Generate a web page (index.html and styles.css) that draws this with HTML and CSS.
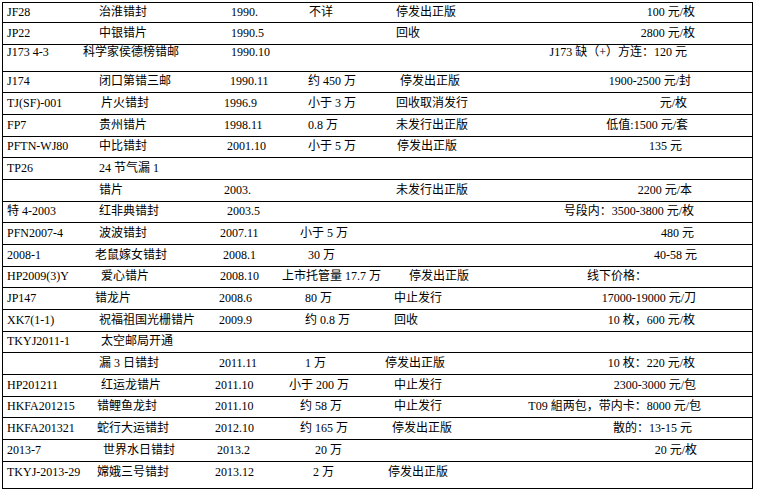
FILE: index.html
```html
<!DOCTYPE html>
<html lang="zh-CN">
<head>
<meta charset="utf-8">
<title>错票列表</title>
<link rel="stylesheet" href="styles.css">
</head>
<body>
<div class="sheet">
  <div class="row first"><span>JF28</span><span>治淮错封</span><span class="x16">1990.</span><span class="x9">不详</span><span class="x4">停发出正版</span><span class="price">100 元/枚</span></div>
  <div class="row"><span>JP22</span><span>中银错片</span><span class="x16">1990.5</span><span></span><span class="x4">回收</span><span class="price">2800 元/枚</span></div>
  <div class="row tall"><span>J173 4-3</span><span class="x-16">科学家侯德榜错邮</span><span class="x16">1990.10</span><span></span><span></span><span class="price r8">J173 缺（+）方连：120 元</span></div>
  <div class="row"><span>J174</span><span>闭口第错三邮</span><span class="x15">1990.11</span><span class="x8">约 450 万</span><span class="x8">停发出正版</span><span class="price r4">1900-2500 元/封</span></div>
  <div class="row"><span>TJ(SF)-001</span><span class="x2">片火错封</span><span class="x9">1996.9</span><span class="x8">小于 3 万</span><span class="x4">回收取消发行</span><span class="price r8">元/枚</span></div>
  <div class="row"><span>FP7</span><span>贵州错片</span><span class="x9">1998.11</span><span class="x8">0.8 万</span><span class="x4">未发行出正版</span><span class="price r7">低值:1500 元/套</span></div>
  <div class="row"><span>PFTN-WJ80</span><span>中比错封</span><span class="x12">2001.10</span><span class="x8">小于 5 万</span><span class="x5">停发出正版</span><span class="price r13">135 元</span></div>
  <div class="row"><span>TP26</span><span>24 节气漏 1</span><span></span><span></span><span></span><span class="price"></span></div>
  <div class="row"><span></span><span>错片</span><span class="x9">2003.</span><span></span><span class="x4">未发行出正版</span><span class="price r3">2200 元/本</span></div>
  <div class="row"><span>特 4-2003</span><span>红非典错封</span><span class="x12">2003.5</span><span></span><span></span><span class="price r1">号段内：3500-3800 元/枚</span></div>
  <div class="row"><span>PFN2007-4</span><span>波波错封</span><span class="x5">2007.11</span><span>小于 5 万</span><span></span><span class="price r1">480 元</span></div>
  <div class="row"><span>2008-1</span><span class="x-4">老鼠嫁女错封</span><span class="x8">2008.1</span><span class="x8">30 万</span><span></span><span class="price r-2">40-58 元</span></div>
  <div class="row"><span>HP2009(3)Y</span><span class="x2">爱心错片</span><span class="x5">2008.10</span><span class="x-18">上市托管量 17.7 万</span><span class="x17">停发出正版</span><span class="price r48">线下价格：</span></div>
  <div class="row"><span>JP147</span><span class="x-4">错龙片</span><span class="x4">2008.6</span><span class="x5">80 万</span><span class="x2">中止发行</span><span class="price r-1">17000-19000 元/刀</span></div>
  <div class="row"><span>XK7(1-1)</span><span>祝福祖国光栅错片</span><span class="x4">2009.9</span><span class="x5">约 0.8 万</span><span class="x2">回收</span><span class="price">10 枚，600 元/枚</span></div>
  <div class="row"><span>TKYJ2011-1</span><span class="x2">太空邮局开通</span><span></span><span></span><span></span><span class="price"></span></div>
  <div class="row"><span></span><span>漏 3 日错封</span><span class="x4">2011.11</span><span class="x5">1 万</span><span class="x-7">停发出正版</span><span class="price">10 枚：220 元/枚</span></div>
  <div class="row"><span>HP201211</span><span class="x2">红运龙错片</span><span>2011.10</span><span class="x-11">小于 200 万</span><span class="x2">中止发行</span><span class="price r-1">2300-3000 元/包</span></div>
  <div class="row"><span>HKFA201215</span><span class="x-2">错鲤鱼龙封</span><span>2011.10</span><span>约 58 万</span><span class="x2">中止发行</span><span class="price r-6">T09 組两包，带内卡：8000 元/包</span></div>
  <div class="row"><span>HKFA201321</span><span class="x-2">蛇行大运错封</span><span>2012.10</span><span>约 165 万</span><span>停发出正版</span><span class="price r3">散的：13-15 元</span></div>
  <div class="row"><span>2013-7</span><span class="x4">世界水日错封</span><span class="x2">2013.2</span><span class="x15">20 万</span><span></span><span class="price r-2">20 元/枚</span></div>
  <div class="row last"><span>TKYJ-2013-29</span><span class="x-2">嫦娥三号错封</span><span>2013.12</span><span class="x13">2 万</span><span class="x-4">停发出正版</span><span class="price"></span></div>
</div>
</body>
</html>
```

FILE: styles.css
```css
html, body {
  margin: 0;
  padding: 0;
  background: #ffffff;
}

body {
  font-family: "Liberation Serif", "Noto Sans CJK SC", serif;
  font-size: 12px;
  color: #000000;
}

.sheet {
  box-sizing: border-box;
  width: 751px;
  margin: 2px 0 0 2px;
  border-left: 1px solid #000;
  border-right: 1px solid #000;
  border-bottom: 1px solid #000;
}

.row {
  box-sizing: border-box;
  display: grid;
  grid-template-columns: 92px 116px 85px 92px 1fr auto;
  align-items: start;
  height: 21.68px;
  padding: 2.5px 57px 0 4px;
  border-top: 1px solid #000;
  line-height: 14px;
  white-space: nowrap;
}

.row.first {
  height: 20px;
  padding-top: 2px;
}

.row.tall {
  height: 27px;
  padding-top: 0.5px;
}

.row.last {
  height: 27px;
  padding-top: 3px;
}

.price {
  text-align: right;
}

/* per-cell horizontal nudges, mirroring the spacing of the source document */
.x2 { margin-left: 2px; }
.x4 { margin-left: 4px; }
.x5 { margin-left: 5px; }
.x8 { margin-left: 8px; }
.x9 { margin-left: 9px; }
.x12 { margin-left: 12px; }
.x13 { margin-left: 13px; }
.x15 { margin-left: 15px; }
.x16 { margin-left: 16px; }
.x17 { margin-left: 17px; }
.x-2 { margin-left: -2px; }
.x-4 { margin-left: -4px; }
.x-7 { margin-left: -7px; }
.x-11 { margin-left: -11px; }
.x-16 { margin-left: -16px; }
.x-18 { margin-left: -18px; }

.r1 { margin-right: 1px; }
.r3 { margin-right: 3px; }
.r4 { margin-right: 4px; }
.r7 { margin-right: 7px; }
.r8 { margin-right: 8px; }
.r13 { margin-right: 13px; }
.r48 { margin-right: 48px; }
.r-1 { margin-right: -1px; }
.r-2 { margin-right: -2px; }
.r-6 { margin-right: -6px; }
```
